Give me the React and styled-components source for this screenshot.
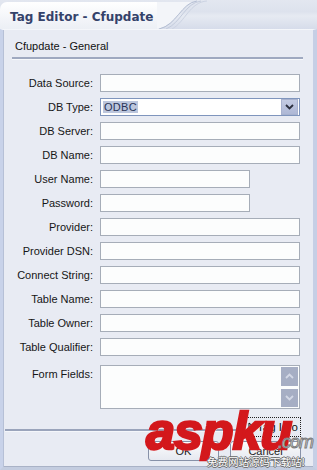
import React from 'react';
import styled, { createGlobalStyle } from 'styled-components';

const Global = createGlobalStyle`
  html, body { margin: 0; padding: 0; background: #e9ecf4; }
  body { width: 317px; height: 470px; overflow: hidden; font-family: "Liberation Sans", Arial, sans-serif; }
`;

const Window = styled.div`
  position: relative;
  width: 317px;
  height: 470px;
  display: flex;
  flex-direction: column;
  background: #dfe4ee;
  overflow: hidden;
`;

const TitleBar = styled.div`
  height: 29px;
  display: flex;
  flex-shrink: 0;
  background: linear-gradient(#e3e7f0 0%, #dde2ed 40%, #e6eaf2 55%, #d6dcea 100%);
`;

const Tab = styled.div`
  width: 157px;
  margin-top: 2px;
  border-top-left-radius: 7px;
  background: linear-gradient(#ffffff, #f3f5f9 60%, #eceff5);
  display: flex;
  align-items: center;
  padding-left: 10px;
  box-sizing: border-box;
`;

const Title = styled.span`
  font-family: "DejaVu Sans", "Liberation Sans", sans-serif;
  font-weight: bold;
  font-size: 12px;
  color: #34426a;
  white-space: nowrap;
  margin-top: 2px;
`;

const Swoosh = styled.svg`
  display: block;
  flex-shrink: 0;
`;

const TitleRest = styled.div`
  flex: 1;
`;

const Body = styled.div`
  flex: 1;
  display: flex;
  flex-direction: column;
  background: #e8ebf3;
  border-left: 3px solid #c8d2e9;
  border-right: 4px solid #c6cfe5;
  border-bottom: 3px solid #c3ccdf;
  border-top: 1px solid #f4f6fa;
  box-shadow: inset 1px 0 0 #b6c0d6, inset 0 -1px 0 #a9b2c6;
`;

const Header = styled.div`
  padding: 10px 10px 0 9px;
  display: flex;
  flex-direction: column;
  gap: 4px;
`;

const HeaderText = styled.div`
  font-size: 11px;
  line-height: 13px;
  color: #111;
  padding-left: 3px;
`;

const Rule = styled.div`
  height: 2px;
  background: #9fa9c0;
  border-bottom: 1px solid #f6f8fb;
`;

const Form = styled.div`
  display: grid;
  grid-template-columns: 81px 200px;
  column-gap: 7px;
  row-gap: 6px;
  grid-auto-rows: 18px;
  padding: 14px 0 0 9px;
`;

const Label = styled.label`
  font-size: 11px;
  color: #161616;
  text-align: right;
  white-space: nowrap;
  align-self: ${p => (p.$top ? 'start' : 'center')};
  padding-top: ${p => (p.$top ? '6px' : '0')};
`;

const Input = styled.div`
  box-sizing: border-box;
  width: ${p => p.$w || 200}px;
  height: 18px;
  background: #fcfdfd;
  border: 1px solid #a6adb8;
`;

const Select = styled.div`
  box-sizing: border-box;
  width: 200px;
  height: 18px;
  background: #ffffff;
  border: 1px solid #7f95bd;
  display: flex;
  align-items: center;
  padding: 0 1px 0 2px;
`;

const SelectValue = styled.span`
  font-size: 11px;
  line-height: 12px;
  padding: 0 1px;
  background: #bcc6dd;
  color: #2a3558;
  letter-spacing: 0.3px;
`;

const SelectSpacer = styled.div`
  flex: 1;
`;

const DropButton = styled.div`
  width: 15px;
  height: 14px;
  background: linear-gradient(#c3cbe2, #aeb8d6);
  border: 1px solid #a8b2cf;
  display: flex;
  align-items: center;
  justify-content: center;
`;

const TextArea = styled.div`
  box-sizing: border-box;
  width: 200px;
  height: 44px;
  margin-top: 3px;
  background: #fcfdfd;
  border: 1px solid #a6adb8;
  display: flex;
  justify-content: flex-end;
  padding: 1px 1px 1px 0;
  grid-row: span 2;
`;

const ScrollBar = styled.div`
  width: 17px;
  display: flex;
  flex-direction: column;
  gap: 3px;
`;

const ScrollBtn = styled.div`
  flex: 1;
  background: #a6aec4;
  display: flex;
  align-items: center;
  justify-content: center;
`;

const Footer = styled.div`
  margin-top: auto;
  display: flex;
  flex-direction: column;
  padding: 0 12px 6px 2px;
`;

const FooterTop = styled.div`
  display: flex;
  align-items: center;
  height: 20px;
`;

const FooterRule = styled.div`
  flex: 1;
  height: 2px;
  margin-top: 6px;
  background: #9aa4bb;
  border-bottom: 1px solid #f4f6fa;
`;

const InfoButton = styled.div`
  width: 56px;
  height: 20px;
  box-sizing: border-box;
  border: 1px dotted #222;
  display: flex;
  align-items: center;
  gap: 2px;
  padding-left: 2px;
  font-size: 11.5px;
  color: #111;
`;

const ButtonRow = styled.div`
  display: flex;
  gap: 11px;
  margin-top: 4px;
  padding-left: 143px;
`;

const Button = styled.div`
  width: 72px;
  height: 20px;
  box-sizing: border-box;
  border: 1px solid #8791a8;
  border-radius: 3px;
  background: linear-gradient(#fbfcfd, #e6e9f0);
  display: flex;
  align-items: center;
  justify-content: center;
  font-size: 11px;
  color: #222;
`;

const Watermark = styled.div`
  position: absolute;
  left: 146px;
  top: 405px;
  font-family: "Liberation Sans", Arial, sans-serif;
  font-weight: bold;
  font-style: italic;
  font-size: 52px;
  line-height: 52px;
  letter-spacing: -1px;
  color: #d3181c;
  -webkit-text-stroke: 2.5px #d3181c;
  text-shadow: 1px 1px 0 #ffffff, -1px 0 0 #ffffff;
  pointer-events: none;
`;

const WatermarkCom = styled.div`
  position: absolute;
  left: 278px;
  top: 433px;
  font-family: "Liberation Sans", Arial, sans-serif;
  font-style: italic;
  font-size: 18px;
  line-height: 18px;
  color: #eeeeee;
  -webkit-text-stroke: 1px #7d7d7d;
  letter-spacing: -1px;
  pointer-events: none;
`;

const WatermarkCn = styled.div`
  position: absolute;
  left: 207px;
  top: 455px;
  font-family: "Noto Sans CJK SC", sans-serif;
  font-size: 10.5px;
  line-height: 13px;
  color: #ffffff;
  text-shadow: 1px 0 0 #666, -1px 0 0 #666, 0 1px 0 #666, 0 -1px 0 #666;
  white-space: nowrap;
  pointer-events: none;
`;

const fields = [
  ['Data Source:', 'input'],
  ['DB Type:', 'select'],
  ['DB Server:', 'input'],
  ['DB Name:', 'input'],
  ['User Name:', 'short'],
  ['Password:', 'short'],
  ['Provider:', 'input'],
  ['Provider DSN:', 'input'],
  ['Connect String:', 'input'],
  ['Table Name:', 'input'],
  ['Table Owner:', 'input'],
  ['Table Qualifier:', 'input'],
];

const Chevron = ({ up, color }) => (
  <svg width="9" height="6" viewBox="0 0 9 6">
    <path d={up ? 'M1 5 L4.5 1.5 L8 5' : 'M1 1 L4.5 4.5 L8 1'} fill="none" stroke={color} strokeWidth="1.8" />
  </svg>
);

export default function App() {
  return (
    <Window>
      <Global />
      <TitleBar>
        <Tab>
          <Title>Tag Editor - Cfupdate</Title>
        </Tab>
        <Swoosh width="50" height="29" viewBox="0 0 50 29">
          <path d="M0 2 H36 C 24 6, 18 26, 0 29 Z" fill="#f3f5f9" />
          <path d="M2 29 C 20 25, 24 3, 40 1" fill="none" stroke="#b3bdd2" strokeWidth="1" />
          <path d="M9 29 C 24 23, 28 3, 44 1" fill="none" stroke="#c3cbdc" strokeWidth="1" />
          <path d="M15 29 C 28 22, 33 2, 50 1" fill="none" stroke="#ccd3e2" strokeWidth="1" />
        </Swoosh>
        <TitleRest />
      </TitleBar>
      <Body>
        <Header>
          <HeaderText>Cfupdate - General</HeaderText>
          <Rule />
        </Header>
        <Form>
          {fields.map(([label, kind]) => (
            <React.Fragment key={label}>
              <Label>{label}</Label>
              {kind === 'select' ? (
                <Select>
                  <SelectValue>ODBC</SelectValue>
                  <SelectSpacer />
                  <DropButton>
                    <Chevron color="#2b2f3e" />
                  </DropButton>
                </Select>
              ) : (
                <Input $w={kind === 'short' ? 150 : 200} />
              )}
            </React.Fragment>
          ))}
          <Label $top>Form Fields:</Label>
          <TextArea>
            <ScrollBar>
              <ScrollBtn>
                <Chevron up color="#d3d8e6" />
              </ScrollBtn>
              <ScrollBtn>
                <Chevron color="#d3d8e6" />
              </ScrollBtn>
            </ScrollBar>
          </TextArea>
        </Form>
        <Footer>
          <FooterTop>
            <FooterRule />
            <InfoButton>
              <svg width="7" height="10" viewBox="0 0 7 10">
                <path d="M1 1 L6 5 L1 9 Z" fill="none" stroke="#111" strokeWidth="1" />
              </svg>
              <span>Tag Info</span>
            </InfoButton>
          </FooterTop>
          <ButtonRow>
            <Button>OK</Button>
            <Button>Cancel</Button>
          </ButtonRow>
        </Footer>
      </Body>
      <Watermark>aspku</Watermark>
      <WatermarkCom>.com</WatermarkCom>
      <WatermarkCn>免费网站源码下载站!</WatermarkCn>
    </Window>
  );
}
